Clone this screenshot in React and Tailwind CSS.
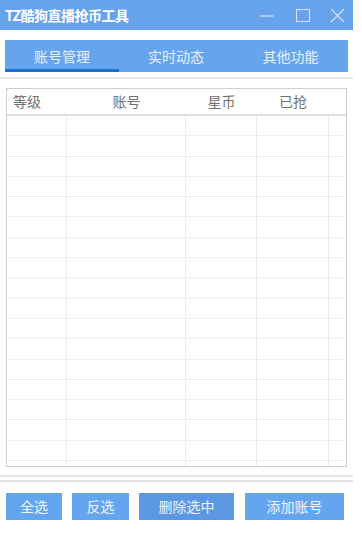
import React from "react";

const F = { fontFamily: '"Noto Sans CJK SC", "Noto Sans", sans-serif' };

export default function App() {
  const rows = Array.from({ length: 18 });
  return (
    <div className="w-[362px] h-[533px] bg-white overflow-hidden relative" style={F}>
      <div className="w-[353px] h-full flex flex-col">
        {/* Title bar */}
        <div className="h-[30px] bg-[#66a3ec] flex items-center pl-[5px] pr-[7px]">
          <div className="text-white text-[14px] font-bold flex-1 leading-none tracking-[-0.5px]">TZ酷狗直播抢币工具</div>
          <div className="flex items-center gap-[18px]">
            <svg width="17" height="17" viewBox="0 0 17 17"><line x1="1" y1="9" x2="15" y2="9" stroke="#d3e4fa" strokeWidth="1.2" /></svg>
            <svg width="17" height="17" viewBox="0 0 17 17"><rect x="2.5" y="2.5" width="13" height="12" fill="none" stroke="#d3e4fa" strokeWidth="1.1" /></svg>
            <svg width="17" height="17" viewBox="0 0 17 17"><path d="M2 2 L15 15 M15 2 L2 15" stroke="#d3e4fa" strokeWidth="1.2" /></svg>
          </div>
        </div>
        {/* Tabs */}
        <div className="mt-[10px] mx-[5px] h-[32px] bg-[#66a4ee] flex">
          <div className="w-[114px] flex items-center justify-center relative text-white/85 text-[14px]">
            账号管理
            <div className="absolute left-0 right-0 bottom-0 h-[3px] bg-[#1d6fd3]" />
          </div>
          <div className="w-[114px] flex items-center justify-center text-white/85 text-[14px]">实时动态</div>
          <div className="flex-1 flex items-center justify-center text-white/85 text-[14px]">其他功能</div>
        </div>
        <div className="mt-[5px] h-[2px] bg-[#e6e6e6]" />
        {/* Table */}
        <div className="mt-[9px] ml-[6px] w-[341px] h-[379px] border border-[#cfcfcf] overflow-hidden flex flex-col">
          <div className="h-[27px] flex items-center text-[14px] text-[#707070] border-b-2 border-[#dedede] shrink-0">
            <div className="w-[60px] pl-[6px]">等级</div>
            <div className="w-[119px] text-center">账号</div>
            <div className="w-[71px] text-center">星币</div>
            <div className="w-[72px] text-center">已抢</div>
            <div className="flex-1" />
          </div>
          <div className="flex-1 overflow-hidden">
            {rows.map((_, i) => (
              <div key={i} className="h-[20.3px] flex border-b border-[#efefef]">
                <div className="w-[60px] border-r border-[#ebebeb]" />
                <div className="w-[119px] border-r border-[#ebebeb]" />
                <div className="w-[71px] border-r border-[#ebebeb]" />
                <div className="w-[72px] border-r border-[#ebebeb]" />
                <div className="flex-1" />
              </div>
            ))}
          </div>
        </div>
        <div className="mt-[8px] h-[2px] bg-[#e4e4e4]" />
        <div className="mt-[3px] h-[2px] bg-[#e4e4e4]" />
        {/* Buttons */}
        <div className="mt-[11px] flex items-center text-white/90 text-[14px]">
          <div className="ml-[6px] w-[56px] h-[27px] bg-[#64a5f0] flex items-center justify-center">全选</div>
          <div className="ml-[10px] w-[57px] h-[27px] bg-[#64a5f0] flex items-center justify-center">反选</div>
          <div className="ml-[10px] w-[95px] h-[27px] bg-[#5c98e2] flex items-center justify-center">删除选中</div>
          <div className="ml-[11px] w-[99px] h-[27px] bg-[#64a5f0] flex items-center justify-center">添加账号</div>
        </div>
      </div>
    </div>
  );
}
